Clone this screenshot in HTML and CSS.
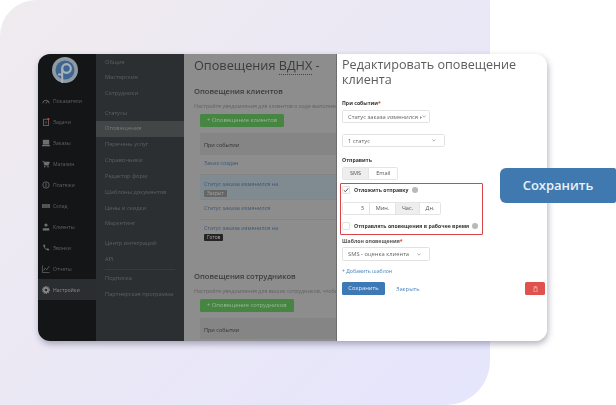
FILE: index.html
```html
<!DOCTYPE html>
<html lang="ru">
<head>
  <meta charset="UTF-8">
  <title>Оповещения</title>
  <link rel="stylesheet" href="styles.css">
</head>
<body>
  <div class="backdrop">
    <div class="app">
      <nav class="sidebar">
        <svg class="logo" viewBox="0 0 26 26">
          <circle cx="13" cy="13" r="13" fill="#8f9aa3"/>
          <circle cx="13" cy="13" r="9.5" fill="#3f6690"/>
          <circle cx="14.500" cy="11.500" r="4.300" fill="none" stroke="#a9b2ba" stroke-width="2.200"/>
          <path d="M10.200 11.500v6M10.200 17.500H6M10.200 17.500V26" fill="none" stroke="#a9b2ba" stroke-width="2"/>
        </svg>
        <a class="side-item"><svg viewBox="0 0 10 10"><path d="M1 8a4 4 0 0 1 8 0M5 8l2-3" fill="none" stroke="#6d7071" stroke-width="1"/></svg>Показатели</a>
        <a class="side-item"><svg viewBox="0 0 10 10"><rect x="2" y="1.5" width="6" height="8" fill="none" stroke="#6d7071"/><path d="M5 4v3" stroke="#6d7071"/><circle cx="8" cy="1.5" r="1.4" fill="#c9433f"/></svg>Задачи</a>
        <a class="side-item"><svg viewBox="0 0 10 10"><rect x="1" y="1" width="8" height="6" fill="#6d7071"/><rect x="0" y="7.5" width="10" height="1.6" fill="#6d7071"/></svg>Заказы</a>
        <a class="side-item"><svg viewBox="0 0 10 10"><path d="M0 1.5h2l1 5h5l1.500-4H2.500" fill="#6d7071" stroke="#6d7071" stroke-width=".6"/><circle cx="3.500" cy="8.500" r="1" fill="#6d7071"/><circle cx="7.500" cy="8.500" r="1" fill="#6d7071"/></svg>Магазин</a>
        <a class="side-item"><svg viewBox="0 0 10 10"><circle cx="5" cy="5" r="4" fill="none" stroke="#6d7071"/><path d="M5 2.500v5" stroke="#6d7071"/></svg>Платежи</a>
        <a class="side-item"><svg viewBox="0 0 10 10"><rect x="0" y="2.500" width="10" height="5" fill="#55585a"/><path d="M3.500 2.500v5M6.500 2.500v5" stroke="#3a3c3d" stroke-width=".6"/></svg>Склад</a>
        <a class="side-item"><svg viewBox="0 0 10 10"><circle cx="5" cy="2.500" r="2" fill="#6d7071"/><path d="M1 9.500V6.500h8v3z" fill="#6d7071"/></svg>Клиенты</a>
        <a class="side-item"><svg viewBox="0 0 10 10"><path d="M1.500 1l1.800-.500 1 2.300-1 .9a6 6 0 0 0 2.500 2.500l.9-1 2.300 1-.5 1.800C6 9 1 4 1.500 1z" fill="#6d7071"/></svg>Звонки</a>
        <a class="side-item"><svg viewBox="0 0 10 10"><path d="M.5 .5v9h9M2 7l2-3 2 2 3-4.500" fill="none" stroke="#6d7071" stroke-width=".9"/></svg>Отчеты</a>
        <a class="side-item active"><svg viewBox="0 0 10 10"><circle cx="5" cy="5" r="2.700" fill="none" stroke="#8a8d8e" stroke-width="2"/><circle cx="5" cy="5" r="4.300" fill="none" stroke="#8a8d8e" stroke-width="1.300" stroke-dasharray="1.500 1.200"/></svg>Настройки</a>
      </nav>

      <div class="submenu">
        <a>Общие</a>
        <a>Мастерские</a>
        <a>Сотрудники</a>
        <a class="sub-gap">Статусы</a>
        <a class="active">Оповещения</a>
        <a>Перечень услуг</a>
        <a>Справочники</a>
        <a>Редактор форм</a>
        <a>Шаблоны документов</a>
        <a>Цены и скидки</a>
        <a>Маркетинг</a>
        <a class="sub-gap">Центр интеграций</a>
        <a>API</a>
        <hr class="sub-line">
        <a>Подписка</a>
        <a>Партнерская программа</a>
      </div>

      <main class="content">
        <h1 class="page-title">Оповещения <span class="dotted">ВДНХ</span> -</h1>
        <h2 class="section-title">Оповещения клиентов</h2>
        <p class="hint">Настройте уведомления для клиентов о ходе выполнен</p>
        <span class="btn-green">+ Оповещение клиентов</span>
        <div class="table">
          <div class="row head">При событии</div>
          <div class="row link">Заказ создан</div>
          <div class="row link picked">Статус заказа изменился на<span class="badge grey">Закрыт</span></div>
          <div class="row link">Статус заказа изменился</div>
          <div class="row link tall">Статус заказа изменился на<span class="badge dark">Готов</span></div>
        </div>
        <h2 class="section-title staff">Оповещения сотрудников</h2>
        <p class="hint">Настройте уведомления для ваших сотрудников, чтобы</p>
        <span class="btn-green">+ Оповещение сотрудников</span>
        <div class="table">
          <div class="row head">При событии</div>
        </div>
      </main>

      <aside class="panel">
        <h2 class="panel-title">Редактировать оповещение клиента</h2>

        <label class="field-label">При событии<span class="req">*</span></label>
        <div class="select narrow"><span>Статус заказа изменился н</span><svg class="chev" viewBox="0 0 6 4"><path d="M.5 .5L3 3l2.500-2.500" fill="none" stroke="#888"/></svg></div>
        <div class="select wide"><span>1 статус</span><svg class="chev" viewBox="0 0 6 4"><path d="M.5 .5L3 3l2.500-2.500" fill="none" stroke="#888"/></svg></div>

        <label class="field-label send">Отправить</label>
        <div class="segments">
          <span class="seg on">SMS</span><span class="seg">Email</span>
        </div>

        <div class="highlight">
          <div class="check-row">
            <span class="check"><svg viewBox="0 0 8 8"><path d="M1 4.200L3.200 6.300 7 1.800" fill="none" stroke="#444" stroke-width="1.200"/></svg></span>
            <b>Отложить отправку</b><i class="help"></i>
          </div>
          <div class="segments delay">
            <span class="seg num">3</span><span class="seg">Мин.</span><span class="seg on">Час.</span><span class="seg">Дн.</span>
          </div>
          <div class="check-row">
            <span class="check"></span>
            <b>Отправлять оповещения в рабочее время</b><i class="help"></i>
          </div>
        </div>

        <label class="field-label tpl">Шаблон оповещения<span class="req">*</span></label>
        <div class="select narrow tall"><span>SMS - оценка клиента</span><svg class="chev" viewBox="0 0 6 4"><path d="M.5 .5L3 3l2.500-2.500" fill="none" stroke="#888"/></svg></div>
        <a class="add-link">+ Добавить шаблон</a>

        <div class="actions">
          <span class="btn-save">Сохранить</span>
          <a class="close-link">Закрыть</a>
          <span class="btn-trash"><svg viewBox="0 0 8 9"><path d="M1.500 2.500h5V9h-5zM.8 1.200h6.400M3 .5h2" fill="none" stroke="#f3c9c7" stroke-width="1"/></svg></span>
        </div>
      </aside>
    </div>
  </div>

  <div class="callout">Сохранить</div>
</body>
</html>
```

FILE: styles.css
```css
* {
  box-sizing: border-box;
}

html, body {
  margin: 0;
  height: 405px;
  overflow: hidden;
  background: #fff;
  font-family: "Open Sans", "Liberation Sans", sans-serif;
}

.backdrop {
  width: 490px;
  height: 405px;
  padding: 54px 0 0 38px;
  background: linear-gradient(135deg, #f0ebee, #e5e5fd);
  border-radius: 36px 0 44px 0;
}

.app {
  display: flex;
  width: 509px;
  height: 287px;
  border-radius: 12px;
  overflow: hidden;
  box-shadow: 1px 3px 6px rgba(60, 60, 90, 0.4);
}

.app > * {
  filter: blur(0.4px);
}

/* left dark column */
.sidebar {
  width: 58px;
  flex: none;
  background: #141516;
  padding-top: 3px;
}

.logo {
  display: block;
  width: 26px;
  height: 26px;
  margin: 0 0 7px 14px;
}

.side-item {
  display: flex;
  align-items: center;
  height: 21px;
  padding-left: 4px;
  gap: 3px;
  font-size: 5.1px;
  color: #5f6263;
}

.side-item svg {
  width: 8px;
  height: 8px;
  flex: none;
}

.side-item.active {
  background: #2b2e30;
  color: #8a8d8e;
}

.submenu {
  width: 88px;
  flex: none;
  background: #2c2f31;
  padding-top: 0.5px;
}

.submenu a {
  display: block;
  height: 15.85px;
  line-height: 15.85px;
  padding-left: 9px;
  font-size: 5.7px;
  white-space: nowrap;
  color: #5d6061;
}

.submenu .sub-gap {
  margin-top: 3.5px;
}

.submenu .active {
  background: #434647;
  color: #77797a;
}

.sub-line {
  height: 1px;
  margin: 2px 9px 1px;
  border: 0;
  background: #383b3d;
}

/* page under the overlay */
.content {
  width: 152px;
  flex: none;
  background: #8d8d8d;
  padding-left: 10px;
  overflow: hidden;
  white-space: nowrap;
  color: #3c3c3c;
}

.page-title {
  margin: 0;
  font-size: 12.7px;
  line-height: 22px;
  font-weight: 400;
}

.dotted {
  border-bottom: 1px dotted #444;
}

.section-title {
  margin: 0;
  padding-top: 9px;
  font-size: 7.6px;
  line-height: 12px;
  font-weight: 600;
}

.section-title.staff {
  padding-top: 25px;
}

.hint {
  margin: 5px 0 4px;
  font-size: 5.3px;
  line-height: 8px;
  color: #626262;
}

.btn-green {
  display: block;
  width: fit-content;
  margin-left: 6px;
  padding: 0 7px;
  height: 13px;
  line-height: 13px;
  border-radius: 1.500px;
  background: #478542;
  font-size: 5.8px;
  color: #97bc94;
}

.table {
  margin: 6px 0 0 6px;
}

.row {
  padding: 4px 0 0 4px;
  font-size: 5.5px;
  line-height: 8px;
}

.row.head {
  height: 21px;
  padding-top: 8px;
  color: #333;
  background: #858585;
}

.row.link {
  height: 20px;
  color: #3b5876;
  border-top: 1px solid #848484;
}

.row.picked {
  height: 25px;
  padding-top: 5px;
  background: #7f8a91;
}

.row.tall {
  height: 26px;
}

.badge {
  display: block;
  width: fit-content;
  margin-top: 2px;
  padding: 0 3px;
  height: 7px;
  line-height: 7px;
  border-radius: 1px;
  font-size: 4.8px;
}

.badge.grey {
  background: #666;
  color: #a2a2a2;
}

.badge.dark {
  background: #252525;
  color: #a8a8a8;
}

/* right white panel */
.panel {
  width: 211px;
  flex: none;
  background: #fff;
  padding: 3px 2px 0 5px;
  border-left: 1px solid #6d6d6d;
  color: #555;
}

.panel-title {
  margin: 0;
  font-size: 12.6px;
  line-height: 15px;
  font-weight: 400;
  color: #5c5c5c;
}

.field-label {
  display: block;
  margin-top: 12px;
  font-size: 5.2px;
  line-height: 8px;
  font-weight: 700;
  color: #333;
}

.field-label.send {
  margin-top: 9px;
}

.field-label.tpl {
  margin-top: 2px;
  color: #555;
}

.req {
  color: #d9453f;
}

.select {
  display: flex;
  align-items: center;
  justify-content: space-between;
  height: 13px;
  margin-top: 3px;
  padding: 0 5px;
  border: 1px solid #e2e2e2;
  border-radius: 1.500px;
  font-size: 5.8px;
  color: #666;
  white-space: nowrap;
}

.select.narrow {
  width: 88px;
  padding-right: 3px;
}

.select.wide {
  width: 103px;
  margin-top: 11px;
  padding-right: 8px;
}

.select.tall {
  height: 14px;
  margin-top: 2px;
  padding-right: 8px;
}

.select span {
  overflow: hidden;
}

.chev {
  width: 4px;
  height: 3px;
  flex: none;
}

.segments {
  display: flex;
  width: fit-content;
  height: 13px;
  margin-top: 3px;
  border: 1px solid #e4e4e4;
  border-radius: 1.500px;
}

.seg {
  padding: 0 7px;
  font-size: 5.6px;
  line-height: 11px;
  color: #555;
  border-left: 1px solid #e4e4e4;
}

.seg:first-child {
  border-left: 0;
}

.seg.on {
  background: #eeeeee;
}

.segments.delay {
  display: grid;
  grid-template-columns: 26px 26px 24px 21px;
  margin: 8px 0 7px;
  text-align: center;
}

.delay .seg {
  padding: 0;
}

.delay .num {
  text-align: right;
  padding-right: 5px;
}

.highlight {
  width: 143px;
  height: 52px;
  margin: 3px 0 0 -2px;
  padding: 2px 1px 0;
  border: 1px solid #d9444a;
  border-radius: 1px;
}

.check-row {
  display: flex;
  align-items: center;
  height: 8px;
  font-size: 5.2px;
  line-height: 8px;
  color: #333;
  white-space: nowrap;
}

.check-row b {
  font-weight: 700;
  margin-left: 4px;
}

.check {
  width: 8px;
  height: 8px;
  flex: none;
  border: 1px solid #e2e2e2;
  border-radius: 1px;
}

.check svg {
  display: block;
  width: 6px;
  height: 6px;
}

.help {
  width: 6px;
  height: 6px;
  margin-left: 3px;
  flex: none;
  border-radius: 50%;
  background: #b9b9b9;
}

.add-link {
  display: block;
  margin-top: 6px;
  font-size: 5.2px;
  line-height: 8px;
  color: #4a83bb;
}

.actions {
  display: flex;
  align-items: center;
  margin-top: 7px;
}

.btn-save {
  width: 43px;
  height: 13px;
  line-height: 13px;
  text-align: center;
  border-radius: 1.500px;
  background: #3d79b5;
  font-size: 5.8px;
  color: #e4edf6;
}

.close-link {
  margin-left: 11px;
  font-size: 5.8px;
  color: #4a83bb;
}

.btn-trash {
  display: flex;
  align-items: center;
  justify-content: center;
  width: 20px;
  height: 13px;
  margin-left: auto;
  border-radius: 1.500px;
  background: #e0524d;
}

.btn-trash svg {
  width: 5px;
  height: 6px;
}

/* zoomed copy of the save button on top of everything */
.callout {
  position: absolute;
  left: 500px;
  top: 168px;
  width: 116px;
  height: 35px;
  line-height: 35px;
  text-align: center;
  border-radius: 6px 2px 2px 6px;
  background: #4079b0;
  font-size: 13px;
  font-weight: 600;
  color: #eaf1f7;
}
```
